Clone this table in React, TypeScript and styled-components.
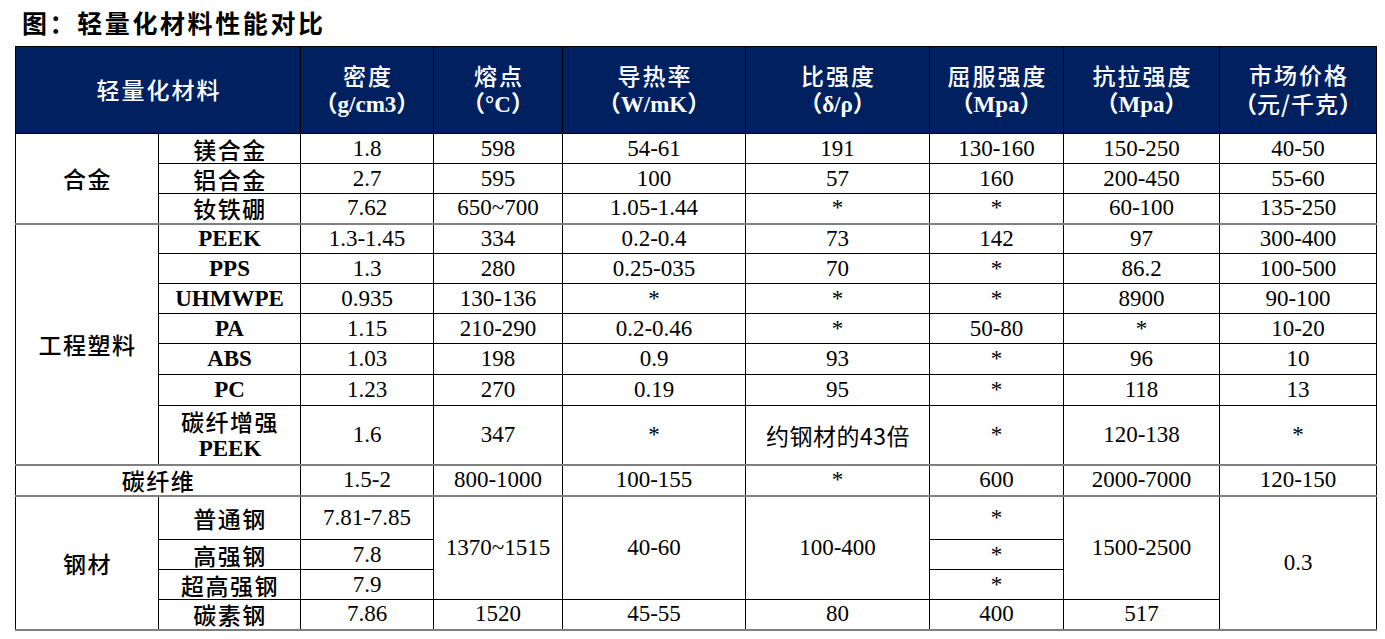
import React from "react";
import styled, { createGlobalStyle, css } from "styled-components";

const Global = createGlobalStyle`
  html, body { margin: 0; padding: 0; background: #fff; }
  body { font-family: "Liberation Serif", "Noto Sans CJK SC", serif; color: #000; }
`;

const Page = styled.div`
  width: 1385px;
  height: 639px;
  overflow: hidden;
  background: #fff;
`;

const Title = styled.h1`
  margin: 0;
  padding: 7px 0 0 22px;
  height: 39px;
  box-sizing: border-box;
  font-family: "Noto Sans CJK SC", sans-serif;
  font-size: 25px;
  line-height: 30px;
  font-weight: 700;
  letter-spacing: 2.6px;
  color: #000;
`;

const Table = styled.table`
  margin: 7px 0 0 15px;
  width: 1361px;
  border-collapse: collapse;
  table-layout: fixed;
  font-family: "Liberation Serif", "Noto Sans CJK SC", serif;
  font-size: 23px;
`;

const HeadRow = styled.tr`
  height: 87px;
`;

const HeadCell = styled.th`
  background: #002060;
  color: #fff;
  border: 1px solid #000;
  padding: 0;
  font-weight: 700;
  line-height: 27px;
  text-align: center;
  vertical-align: middle;
`;

const HeadZh = styled.span<{ $inline?: boolean }>`
  display: ${(p) => (p.$inline ? "inline" : "block")};
  font-family: "Noto Sans CJK SC", sans-serif;
  font-weight: 500;
  letter-spacing: ${(p) => (p.$inline ? "1px" : "2px")};
  padding-left: ${(p) => (p.$inline ? "0" : "2px")};
  margin-bottom: ${(p) => (p.$inline ? "0" : "2px")};
`;

const HeadUnit = styled.span`
  display: block;
  white-space: nowrap;
`;

const Row = styled.tr<{ $h?: number }>`
  height: ${(p) => p.$h ?? 30}px;
`;

const Cell = styled.td<{
  $zh?: boolean;
  $plain?: boolean;
  $bold?: boolean;
  $sep?: boolean;
  $last?: boolean;
}>`
  border: 1px solid #000;
  padding: 0;
  text-align: center;
  vertical-align: middle;
  line-height: 26px;
  font-weight: ${(p) => (p.$bold ? 700 : 400)};
  ${(p) =>
    p.$zh &&
    css`
      font-family: "Noto Sans CJK SC", sans-serif;
      font-weight: ${p.$plain ? 400 : 500};
      letter-spacing: ${p.$plain ? "0.5px" : "1.5px"};
      padding-left: 1px;
    `}
  ${(p) =>
    p.$sep &&
    css`
      border-top: 2px solid #7f7f7f;
    `}
  ${(p) =>
    p.$last &&
    css`
      border-bottom: 2px solid #7f7f7f;
    `}
`;

const Latin = styled.span`
  display: block;
  line-height: 28px;
  font-family: "Liberation Serif", serif;
  font-weight: 700;
  letter-spacing: 0;
`;

const Line = styled.span`
  display: block;
  line-height: 28px;
`;

const widths = [143, 142, 133, 129, 183, 184, 134, 156, 157];

export default function App() {
  return (
    <Page>
      <Global />
      <Title>图：轻量化材料性能对比</Title>
      <Table>
        <colgroup>
          {widths.map((w, i) => (
            <col key={i} style={{ width: w }} />
          ))}
        </colgroup>
        <thead>
          <HeadRow>
            <HeadCell colSpan={2}>
              <HeadZh>轻量化材料</HeadZh>
            </HeadCell>
            <HeadCell>
              <HeadZh>密度</HeadZh>
              <HeadUnit>（g/cm3）</HeadUnit>
            </HeadCell>
            <HeadCell>
              <HeadZh>熔点</HeadZh>
              <HeadUnit>（°C）</HeadUnit>
            </HeadCell>
            <HeadCell>
              <HeadZh>导热率</HeadZh>
              <HeadUnit>（W/mK）</HeadUnit>
            </HeadCell>
            <HeadCell>
              <HeadZh>比强度</HeadZh>
              <HeadUnit>（δ/ρ）</HeadUnit>
            </HeadCell>
            <HeadCell>
              <HeadZh>屈服强度</HeadZh>
              <HeadUnit>（Mpa）</HeadUnit>
            </HeadCell>
            <HeadCell>
              <HeadZh>抗拉强度</HeadZh>
              <HeadUnit>（Mpa）</HeadUnit>
            </HeadCell>
            <HeadCell>
              <HeadZh>市场价格</HeadZh>
              <HeadUnit>
                （<HeadZh $inline>元/千克</HeadZh>）
              </HeadUnit>
            </HeadCell>
          </HeadRow>
        </thead>
        <tbody>
          <Row>
            <Cell $zh rowSpan={3}>合金</Cell>
            <Cell $zh>镁合金</Cell>
            <Cell>1.8</Cell>
            <Cell>598</Cell>
            <Cell>54-61</Cell>
            <Cell>191</Cell>
            <Cell>130-160</Cell>
            <Cell>150-250</Cell>
            <Cell>40-50</Cell>
          </Row>
          <Row>
            <Cell $zh>铝合金</Cell>
            <Cell>2.7</Cell>
            <Cell>595</Cell>
            <Cell>100</Cell>
            <Cell>57</Cell>
            <Cell>160</Cell>
            <Cell>200-450</Cell>
            <Cell>55-60</Cell>
          </Row>
          <Row>
            <Cell $zh>钕铁硼</Cell>
            <Cell>7.62</Cell>
            <Cell>650~700</Cell>
            <Cell>1.05-1.44</Cell>
            <Cell>*</Cell>
            <Cell>*</Cell>
            <Cell>60-100</Cell>
            <Cell>135-250</Cell>
          </Row>
          <Row>
            <Cell $zh $sep rowSpan={7}>工程塑料</Cell>
            <Cell $bold $sep>PEEK</Cell>
            <Cell $sep>1.3-1.45</Cell>
            <Cell $sep>334</Cell>
            <Cell $sep>0.2-0.4</Cell>
            <Cell $sep>73</Cell>
            <Cell $sep>142</Cell>
            <Cell $sep>97</Cell>
            <Cell $sep>300-400</Cell>
          </Row>
          <Row>
            <Cell $bold>PPS</Cell>
            <Cell>1.3</Cell>
            <Cell>280</Cell>
            <Cell>0.25-035</Cell>
            <Cell>70</Cell>
            <Cell>*</Cell>
            <Cell>86.2</Cell>
            <Cell>100-500</Cell>
          </Row>
          <Row>
            <Cell $bold>UHMWPE</Cell>
            <Cell>0.935</Cell>
            <Cell>130-136</Cell>
            <Cell>*</Cell>
            <Cell>*</Cell>
            <Cell>*</Cell>
            <Cell>8900</Cell>
            <Cell>90-100</Cell>
          </Row>
          <Row>
            <Cell $bold>PA</Cell>
            <Cell>1.15</Cell>
            <Cell>210-290</Cell>
            <Cell>0.2-0.46</Cell>
            <Cell>*</Cell>
            <Cell>50-80</Cell>
            <Cell>*</Cell>
            <Cell>10-20</Cell>
          </Row>
          <Row $h={31}>
            <Cell $bold>ABS</Cell>
            <Cell>1.03</Cell>
            <Cell>198</Cell>
            <Cell>0.9</Cell>
            <Cell>93</Cell>
            <Cell>*</Cell>
            <Cell>96</Cell>
            <Cell>10</Cell>
          </Row>
          <Row $h={31}>
            <Cell $bold>PC</Cell>
            <Cell>1.23</Cell>
            <Cell>270</Cell>
            <Cell>0.19</Cell>
            <Cell>95</Cell>
            <Cell>*</Cell>
            <Cell>118</Cell>
            <Cell>13</Cell>
          </Row>
          <Row $h={59}>
            <Cell $zh>
              <Line>碳纤增强</Line>
              <Latin>PEEK</Latin>
            </Cell>
            <Cell>1.6</Cell>
            <Cell>347</Cell>
            <Cell>*</Cell>
            <Cell $zh $plain>约钢材的43倍</Cell>
            <Cell>*</Cell>
            <Cell>120-138</Cell>
            <Cell>*</Cell>
          </Row>
          <Row $h={31}>
            <Cell $zh $sep $last colSpan={2}>碳纤维</Cell>
            <Cell $sep $last>1.5-2</Cell>
            <Cell $sep $last>800-1000</Cell>
            <Cell $sep $last>100-155</Cell>
            <Cell $sep $last>*</Cell>
            <Cell $sep $last>600</Cell>
            <Cell $sep $last>2000-7000</Cell>
            <Cell $sep $last>120-150</Cell>
          </Row>
          <Row $h={44}>
            <Cell $zh rowSpan={4} $last>钢材</Cell>
            <Cell $zh>普通钢</Cell>
            <Cell>7.81-7.85</Cell>
            <Cell rowSpan={3}>1370~1515</Cell>
            <Cell rowSpan={3}>40-60</Cell>
            <Cell rowSpan={3}>100-400</Cell>
            <Cell>*</Cell>
            <Cell rowSpan={3}>1500-2500</Cell>
            <Cell rowSpan={4} $last>0.3</Cell>
          </Row>
          <Row>
            <Cell $zh>高强钢</Cell>
            <Cell>7.8</Cell>
            <Cell>*</Cell>
          </Row>
          <Row>
            <Cell $zh>超高强钢</Cell>
            <Cell>7.9</Cell>
            <Cell>*</Cell>
          </Row>
          <Row>
            <Cell $zh $last>碳素钢</Cell>
            <Cell $last>7.86</Cell>
            <Cell $last>1520</Cell>
            <Cell $last>45-55</Cell>
            <Cell $last>80</Cell>
            <Cell $last>400</Cell>
            <Cell $last>517</Cell>
          </Row>
        </tbody>
      </Table>
    </Page>
  );
}
